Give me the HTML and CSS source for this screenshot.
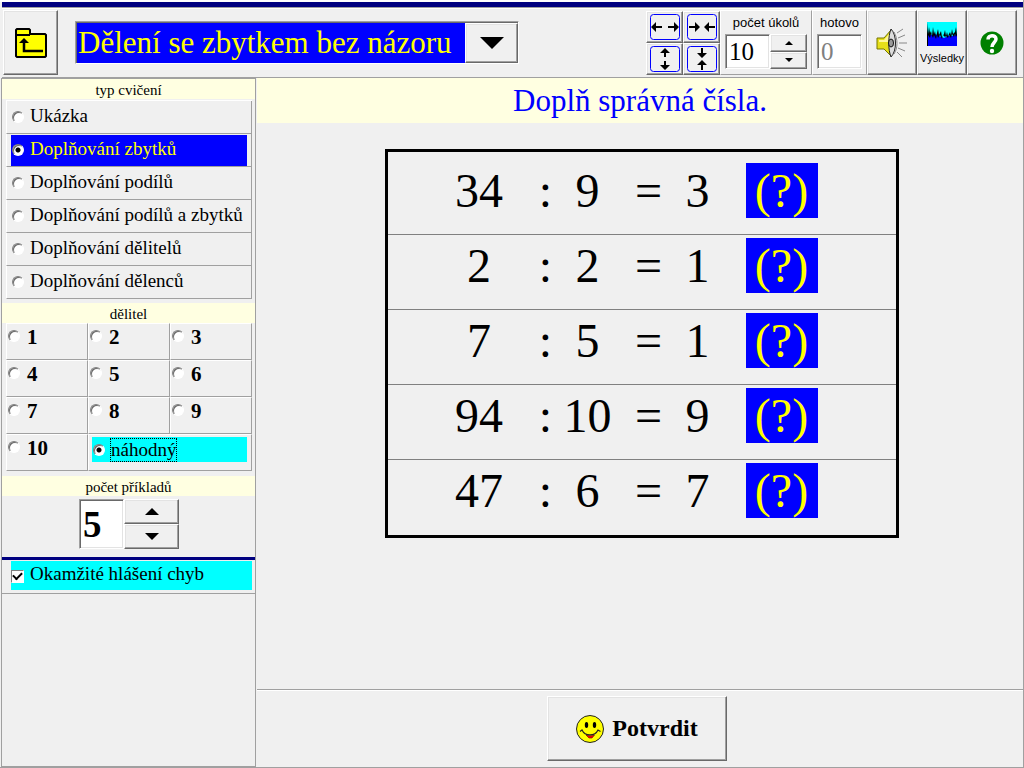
FILE: index.html
```html
<!DOCTYPE html>
<html lang="cs">
<head>
<meta charset="utf-8">
<title>Dělení se zbytkem bez názoru</title>
<link rel="stylesheet" href="styles.css">
</head>
<body>
<div class="app">
  <header class="toolbar">
    <button class="btn tool" type="button" aria-label="Zpět">
      <svg width="32" height="30" viewBox="0 0 32 30"><path d="M1 28V2L2 1H14L15 2V6H30L31 7V28L30 29H2Z" fill="#ff0" stroke="#000" stroke-width="2"/><path d="M1 7H15" stroke="#000" stroke-width="2"/><path d="M9 14V23H28" fill="none" stroke="#000" stroke-width="2.5"/><path d="M4 15L9 10L14 15Z"/></svg>
    </button>
    <div class="combo">
      <select aria-label="Cvičení"><option>Dělení se zbytkem bez názoru</option></select>
      <span class="btn combo-arrow"><svg width="24" height="12" viewBox="0 0 24 12"><path d="M0 0H24L12 12Z"/></svg></span>
    </div>
    <div class="sizes">
      <button class="btn mini" type="button" aria-label="Rozšířit"><svg width="30" height="26" viewBox="0 0 30 26"><rect x=".5" y=".5" width="29" height="25" rx="3" class="frame"/><path d="M5 12h7v2H5zM18 12h7v2h-7z"/><path d="M1 13L6 8V18ZM29 13L24 8V18Z"/></svg></button>
      <button class="btn mini" type="button" aria-label="Zúžit"><svg width="30" height="26" viewBox="0 0 30 26"><rect x=".5" y=".5" width="29" height="25" rx="3" class="frame"/><path d="M2 12h6v2H2zM22 12h6v2h-6z"/><path d="M13 13L8 8V18ZM17 13L22 8V18Z"/></svg></button>
      <button class="btn mini" type="button" aria-label="Zvýšit"><svg width="30" height="26" viewBox="0 0 30 26"><rect x=".5" y=".5" width="29" height="25" rx="3" class="frame"/><path d="M14 5h2v6h-2zM14 15h2v6h-2z"/><path d="M15 2L20 7H10ZM15 24L20 19H10Z"/></svg></button>
      <button class="btn mini" type="button" aria-label="Snížit"><svg width="30" height="26" viewBox="0 0 30 26"><rect x=".5" y=".5" width="29" height="25" rx="3" class="frame"/><path d="M14 2h2v6h-2zM14 18h2v6h-2z"/><path d="M15 12L20 7H10ZM15 14L20 19H10Z"/></svg></button>
    </div>
    <div class="counter">
      <label for="tasks">počet úkolů</label>
      <div class="spin">
        <input id="tasks" class="field" type="text" value="10">
        <div class="spin-buttons">
          <button class="btn" type="button" aria-label="Více úkolů"><svg width="8" height="4" viewBox="0 0 8 4"><path d="M0 4L4 0L8 4Z"/></svg></button>
          <button class="btn" type="button" aria-label="Méně úkolů"><svg width="8" height="4" viewBox="0 0 8 4"><path d="M0 0L4 4L8 0Z"/></svg></button>
        </div>
      </div>
    </div>
    <div class="counter">
      <label for="done">hotovo</label>
      <input id="done" class="field" type="text" value="0" disabled>
    </div>
    <div class="actions">
      <button class="btn" type="button" aria-label="Zvuk">
        <svg width="32" height="30" viewBox="0 0 32 30"><path d="M1 10H8L15 2V28L8 21H1Z" fill="#e6df19" stroke="#777700"/><path d="M3 12H8L14 5V14H3Z" fill="#fff799"/><path d="M15 1C21 7 21 23 15 29C12 22 12 8 15 1Z" fill="#ddd" stroke="#222"/><ellipse cx="15" cy="15" rx="2.5" ry="4" fill="#999" stroke="#111"/><path d="M18 4C22 11 22 20 18 26" fill="none" stroke="#888"/><path d="M21 5L27 1M22 10L29 7M23 15H31M22 20L29 23M21 24L26 29" stroke="#888" fill="none"/></svg>
      </button>
      <button class="btn results" type="button">
        <svg width="30" height="24" viewBox="0 0 30 24"><path d="M0 0H30V24H0Z" fill="#0ff"/><path d="M0 13L2 12L5 13L8 12L12 14L17 16L21 14L25 14L28 13L30 12V24H0Z" fill="#00f"/><path d="M0 24V0L1 12L2 5L3 11L4 9L5 14L6 5L7 12L8 9L9 15L10 11L11 7L12 13L14 9L15 15L17 12L18 8L19 14L20 10L21 14L23 10L24 13L25 7L26 12L28 10L29 5L30 13L29 15L28 12L27 15L25 12L24 16L22 13L21 16L19 14L18 15L16 13L15 17L13 13L11 16L10 13L9 17L7 13L6 16L4 12L3 16L1 13V24Z"/></svg>
        <span>Výsledky</span>
      </button>
      <button class="btn" type="button" aria-label="Nápověda">
        <svg width="24" height="24" viewBox="0 0 24 24"><circle cx="12" cy="12" r="11.5" fill="#008000"/><path d="M8 8.500C8 3.500 16 3.500 16 8C16 11.500 12 11.500 12 16" fill="none" stroke="#fff" stroke-width="3.500"/><circle cx="12" cy="20" r="2.200" fill="#fff"/></svg>
      </button>
    </div>
  </header>

  <div class="body">
    <aside class="sidebar">
      <h2 class="strip" id="type">typ cvičení</h2>
      <div class="options" role="radiogroup" aria-labelledby="type">
        <div class="option"><label><input type="radio" name="type">Ukázka</label></div>
        <div class="option"><label class="chosen"><input type="radio" name="type" checked>Doplňování zbytků</label></div>
        <div class="option"><label><input type="radio" name="type">Doplňování podílů</label></div>
        <div class="option"><label><input type="radio" name="type">Doplňování podílů a zbytků</label></div>
        <div class="option"><label><input type="radio" name="type">Doplňování dělitelů</label></div>
        <div class="option"><label><input type="radio" name="type">Doplňování dělenců</label></div>
      </div>
      <h2 class="strip" id="divisor">dělitel</h2>
      <div class="divisors" role="radiogroup" aria-labelledby="divisor">
        <label><input type="radio" name="div">1</label>
        <label><input type="radio" name="div">2</label>
        <label><input type="radio" name="div">3</label>
        <label><input type="radio" name="div">4</label>
        <label><input type="radio" name="div">5</label>
        <label><input type="radio" name="div">6</label>
        <label><input type="radio" name="div">7</label>
        <label><input type="radio" name="div">8</label>
        <label><input type="radio" name="div">9</label>
        <label><input type="radio" name="div">10</label>
        <div class="random"><label><input type="radio" name="div" checked><span>náhodný</span></label></div>
      </div>
      <h2 class="strip"><label for="count">počet příkladů</label></h2>
      <div class="spin spin-large">
        <input id="count" class="field" type="text" value="5">
        <div class="spin-buttons">
          <button class="btn" type="button" aria-label="Více příkladů"><svg width="14" height="7" viewBox="0 0 14 7"><path d="M0 7L7 0L14 7Z"/></svg></button>
          <button class="btn" type="button" aria-label="Méně příkladů"><svg width="14" height="7" viewBox="0 0 14 7"><path d="M0 0L7 7L14 0Z"/></svg></button>
        </div>
      </div>
      <div class="report"><label><input type="checkbox" checked>Okamžité hlášení chyb</label></div>
    </aside>

    <main class="main">
      <h1 class="task">Doplň správná čísla.</h1>
      <div class="work">
        <table class="problems">
          <tr><td class="dividend">34</td><td class="colon">:</td><td class="divisor">9</td><td class="equals">=</td><td class="quotient">3</td><td class="rest"><input type="text" value="(?)" aria-label="Zbytek 34 : 9"></td></tr>
          <tr><td class="dividend">2</td><td class="colon">:</td><td class="divisor">2</td><td class="equals">=</td><td class="quotient">1</td><td class="rest"><input type="text" value="(?)" aria-label="Zbytek 2 : 2"></td></tr>
          <tr><td class="dividend">7</td><td class="colon">:</td><td class="divisor">5</td><td class="equals">=</td><td class="quotient">1</td><td class="rest"><input type="text" value="(?)" aria-label="Zbytek 7 : 5"></td></tr>
          <tr><td class="dividend">94</td><td class="colon">:</td><td class="divisor">10</td><td class="equals">=</td><td class="quotient">9</td><td class="rest"><input type="text" value="(?)" aria-label="Zbytek 94 : 10"></td></tr>
          <tr><td class="dividend">47</td><td class="colon">:</td><td class="divisor">6</td><td class="equals">=</td><td class="quotient">7</td><td class="rest"><input type="text" value="(?)" aria-label="Zbytek 47 : 6"></td></tr>
        </table>
      </div>
      <footer class="confirm">
        <button class="btn" type="button">
          <svg width="28" height="28" viewBox="0 0 28 28"><circle cx="14" cy="14" r="13.500" fill="#ff0" stroke="#222"/><ellipse cx="10.500" cy="10" rx="1.700" ry="3"/><ellipse cx="18.500" cy="10" rx="1.700" ry="3"/><path d="M10 20C12 21 17 21 18.500 20L16 23H13Z" fill="#f00" stroke="#600" stroke-width=".6"/><path d="M4 16.500L6 15C9 21.500 19 21.500 22 15L24.500 16.500" fill="none" stroke="#222" stroke-width="1.200"/></svg>
          Potvrdit
        </button>
      </footer>
    </main>
  </div>
</div>
</body>
</html>
```

FILE: styles.css
```css
* { box-sizing: border-box; }

body {
  margin: 0;
  background: #f0f0f0;
  color: #000;
  font-family: "Liberation Serif", "Times New Roman", serif;
}

button, input, select { font: inherit; color: inherit; margin: 0; padding: 0; border-radius: 0; }
svg { display: block; flex: none; }
h1, h2 { margin: 0; font-weight: normal; }

.app {
  display: flex;
  flex-direction: column;
  min-height: 100vh;
  border: 1px solid #a0a0a0;
  border-width: 0 1px 1px 0;
}
.app::before { content: ""; height: 2px; flex: none; background: #fff; }

/* Raised Windows-style button */
.btn {
  display: flex;
  align-items: center;
  justify-content: center;
  background: #f0f0f0;
  border: 1px solid;
  border-color: #fff #696969 #696969 #fff;
  box-shadow: inset -1px -1px #a0a0a0, inset 1px 1px #e3e3e3;
}

.field {
  background: #fff;
  border: 1px solid;
  border-color: #a0a0a0 #fff #fff #a0a0a0;
  box-shadow: inset 1px 1px #696969, inset -1px -1px #e3e3e3;
}

/* Toolbar */
.toolbar {
  display: flex;
  align-items: flex-start;
  flex: none;
  height: 76px;
  margin-left: 2px;
  padding: 3px 6px 0 1px;
  border-top: 5px solid #000080;
  border-bottom: 1px solid #a0a0a0;
  box-shadow: inset 0 1px #a0a0a0, inset 0 2px #fff;
}
.tool { width: 55px; height: 65px; }

.combo {
  display: flex;
  width: 444px;
  height: 43px;
  margin: 11px auto 0 17px;
  border: 1px solid;
  border-color: #a0a0a0 #fff #fff #a0a0a0;
  box-shadow: inset 1px 1px #696969;
  padding: 1px 0 0 1px;
}
.combo select {
  flex: 1;
  min-width: 0;
  appearance: none;
  border: 0;
  padding-left: 1px;
  background: #00f;
  color: #ff0;
  font-size: 31px;
  line-height: 38px;
}
.combo-arrow { width: 53px; }

.sizes {
  display: grid;
  grid-template-columns: 37px 37px;
  grid-template-rows: 32px 32px;
  margin-top: 1px;
}
.frame { fill: none; stroke: #00f; }

.counter {
  display: flex;
  flex-direction: column;
  height: 65px;
  padding: 5px 4px 0;
  border: 1px solid;
  border-color: #fff #a0a0a0 #a0a0a0 #fff;
  font-family: "Liberation Sans", Arial, sans-serif;
  font-size: 13px;
  line-height: 14px;
  text-align: center;
}
.counter .field {
  width: 45px;
  height: 35px;
  padding-left: 3px;
  font-family: "Liberation Serif", "Times New Roman", serif;
  font-size: 25px;
}
.counter .field:disabled { color: #808080; }
.counter > label { margin-bottom: 4px; }
.spin { display: flex; }
.spin-buttons { display: grid; grid-template-rows: 1fr 1fr; width: 37px; }

.actions { display: grid; grid-template-columns: repeat(3, 50px); height: 65px; }
.results {
  flex-direction: column;
  gap: 6px;
  font-family: "Liberation Sans", Arial, sans-serif;
  font-size: 11px;
  line-height: 12px;
}

/* Two-column body */
.body { display: flex; flex: 1; }

.sidebar {
  flex: none;
  width: 255px;
  margin-left: 1px;
  border: 1px solid #a0a0a0;
}
.strip {
  height: 20px;
  background: #ffffe1;
  font-size: 15px;
  line-height: 22px;
  text-align: center;
}

input[type="radio"] {
  appearance: none;
  flex: none;
  width: 12px;
  height: 12px;
  border: 1px solid;
  border-color: #808080 #fff #fff #808080;
  border-radius: 50%;
  background: #fff;
  box-shadow: inset 1px 1px #696969;
}
input[type="radio"]:checked { background: radial-gradient(circle, #000 2px, #fff 3px); }

.options { margin: 1px 3px 4px 4px; border-top: 1px solid #fff; }
.option {
  height: 33px;
  padding: 1px 4px 0;
  border: 1px solid;
  border-color: #fff #a0a0a0 #a0a0a0 #fff;
  border-top: 0;
  font-size: 19px;
}
.option label {
  display: flex;
  gap: 6px;
  height: 31px;
  padding: 4px 1px 0;
  line-height: 20px;
}
.option input { margin-top: 5px; }
.chosen { background: #00f; color: #ff0; }

.divisors {
  display: grid;
  grid-template-columns: repeat(3, 1fr);
  grid-auto-rows: 37px;
  margin: 0 3px 5px 4px;
  font-size: 21px;
  font-weight: bold;
  line-height: 24px;
}
.divisors > * {
  border: 1px solid;
  border-color: #fff #a0a0a0 #a0a0a0 #fff;
}
.divisors > label { display: flex; gap: 7px; padding: 1px; }
.divisors > label input { margin-top: 5px; }
.random { grid-column: span 2; padding: 2px 4px 0 3px; font-size: 19px; font-weight: normal; }
.random label { display: flex; align-items: center; gap: 6px; height: 25px; padding-left: 1px; background: #0ff; }
.random span { outline: 1px dotted #000; line-height: 22px; }

.spin-large { width: 100px; margin: 3px auto 8px 77px; }
.spin-large .field { width: 45px; height: 50px; padding-left: 3px; font-size: 37px; font-weight: bold; }
.spin-large .spin-buttons { width: 55px; }

.report {
  height: 37px;
  padding: 1px 3px 0 9px;
  border-top: 3px solid #000080;
  border-bottom: 1px solid #a0a0a0;
  font-size: 19px;
}
.report label { display: flex; align-items: center; gap: 6px; height: 29px; padding: 0 0 3px; background: #0ff; }
.report input {
  appearance: none;
  flex: none;
  width: 13px;
  height: 13px;
  margin-top: 4px;
  border: 1px solid;
  border-color: #808080 #fff #fff #808080;
  background: #fff;
  display: grid;
  place-items: center;
}
.report input:checked::after {
  content: "";
  width: 7px;
  height: 4px;
  margin-bottom: 2px;
  border: solid #000;
  border-width: 0 0 2px 2px;
  transform: rotate(-45deg);
}

/* Exercise area */
.main { display: flex; flex: 1; flex-direction: column; margin-left: 1px; }
.task {
  height: 45px;
  padding-top: 4px;
  background: #ffffe1;
  color: #00f;
  font-size: 31px;
  line-height: 37px;
  text-align: center;
}
.work { flex: 1; padding: 26px 0 24px 3px; }
.problems {
  margin: 0 auto;
  border: 3px solid #000;
  border-spacing: 0;
  font-size: 48px;
  line-height: 55px;
}
.problems td {
  height: 75px;
  padding: 3px 0 0;
  border-bottom: 1px solid #808080;
  text-align: center;
  vertical-align: top;
}
.problems tr:first-child td { height: 83px; padding-top: 11px; }
.problems tr:last-child td { border-bottom: 0; }
.problems .dividend { width: 143px; padding-left: 40px; }
.colon, .quotient { width: 30px; }
.divisor { width: 54px; }
.equals { width: 68px; }
.problems .rest { width: 183px; padding-left: 33px; text-align: left; }
.rest input {
  display: block;
  width: 72px;
  height: 55px;
  border: 0;
  background: #00f;
  color: #ff0;
  text-align: center;
}

.confirm {
  display: flex;
  justify-content: center;
  padding: 6px 6px 6px 0;
  border-top: 1px solid #a0a0a0;
  box-shadow: inset 0 1px #fff;
}
.confirm .btn { gap: 8px; width: 180px; height: 65px; font-size: 24px; font-weight: bold; }
```
